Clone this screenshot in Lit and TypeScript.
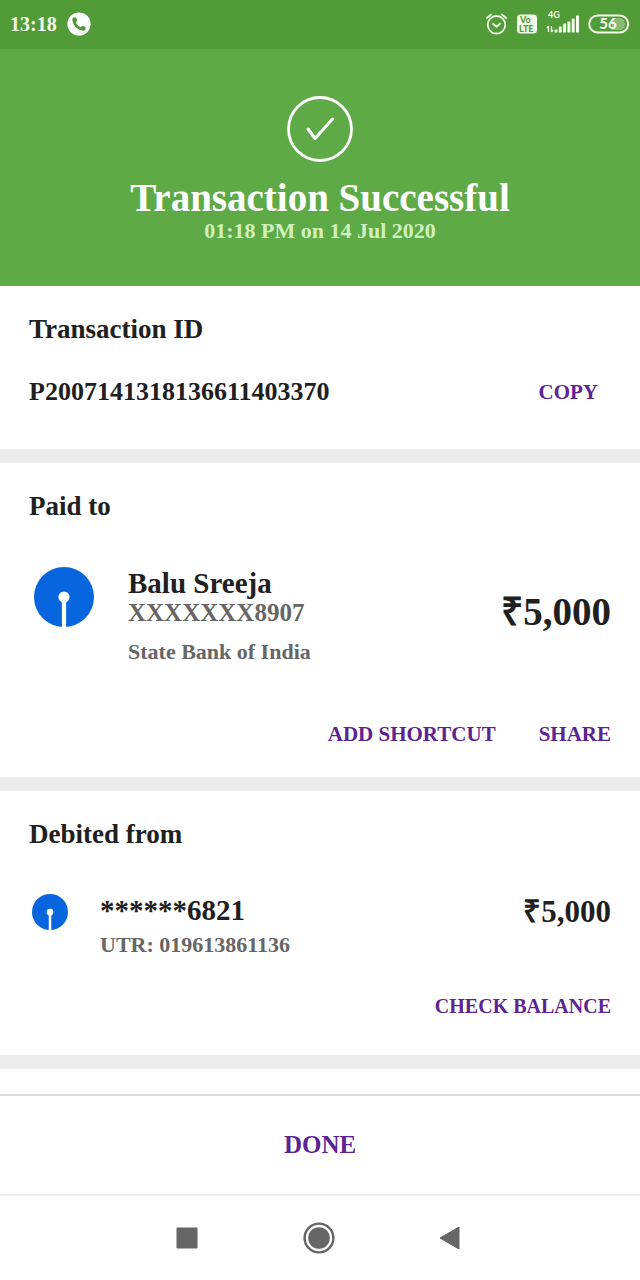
import { LitElement, html, css, svg } from "lit";
import { customElement, property } from "lit/decorators.js";

@customElement("bank-logo")
class BankLogo extends LitElement {
  static styles = css`
    :host { display: block; }
    .mark { display: block; width: 100%; }
  `;
  render() {
    return html`<svg class="mark" viewBox="0 0 60 60" role="img" aria-label="State Bank of India">
      <circle cx="30" cy="30" r="30" fill="#0766de" />
      <circle cx="30" cy="30" r="5.600" fill="#fff" />
      <path d="M30 30V60" stroke="#fff" stroke-width="4.200" />
    </svg>`;
  }
}

@customElement("status-bar")
class StatusBar extends LitElement {
  @property() time = "";
  @property() battery = "";
  static styles = css`
    :host {
      display: flex;
      align-items: center;
      justify-content: space-between;
      height: 49px;
      padding: 0 10px 1px;
      box-sizing: border-box;
      background: #519b38;
      color: #f3fbe9;
    }
    .group { display: flex; align-items: center; gap: 10px; }
    .time { font-size: 20px; line-height: 24px; font-weight: 700; }
    svg { display: block; }
    .status { gap: 8px; }
    .tag { font: 700 9px/10px "Lato", sans-serif; fill: #f3fbe9; }
    .volte { font: 900 9px/9px "Lato", sans-serif; fill: #519b38; }
    .level { font: 900 15px/18px "Lato", sans-serif; fill: #f3fbe9; }
  `;
  render() {
    const bars = [3, 6, 9, 11, 14, 17];
    return html`
      <div class="group">
        <span class="time">${this.time}</span>
        <svg width="24" height="24" viewBox="0 0 24 24" aria-hidden="true">
          <circle cx="12" cy="12" r="11.600" fill="#fff" />
          <path
            d="M7 5.600 9 5.300 10.300 8.700 8.800 10.300C9.800 12.500 11.400 14.100 13.700 15.200L15.300 13.700 18.700 15 18.500 17C18.200 18.200 17.300 18.800 16.100 18.700C10.500 18 6 13.500 5.400 7.900C5.300 6.800 5.800 5.900 7 5.600Z"
            fill="#519b38"
          />
        </svg>
      </div>
      <div class="group status">
        <svg width="23" height="24" viewBox="0 0 23 24" fill="none" stroke="#f3fbe9" stroke-width="1.800" stroke-linecap="round" aria-hidden="true">
          <circle cx="10.500" cy="12.800" r="8.800" />
          <path d="M7 11.800 10.500 14.800 14 11.800M0.900 6 5 2.500M20.100 6 16 2.500" />
        </svg>
        <svg width="20" height="20" viewBox="0 0 20 20" aria-hidden="true">
          <rect width="20" height="19" y="0.500" rx="3.500" fill="#f3fbe9" />
          <text class="volte" x="3" y="9">Vo</text>
          <text class="volte" x="2" y="17.500">LTE</text>
        </svg>
        <svg width="35" height="34" viewBox="0 0 35 34" aria-hidden="true">
          <text class="tag" x="3" y="11">4G</text>
          <path d="M3.500 25V19M2 21 3.500 19M6.500 19V25M8 23 6.500 25" stroke="#f3fbe9" stroke-width="1.300" fill="none" />
          ${bars.map((h, i) => svg`<rect x=${9.5 + i * 4.3} y=${25.5 - h} width="3" height=${h} rx="0.500" fill="#f3fbe9" />`)}
        </svg>
        <svg width="42" height="20" viewBox="0 0 42 20" role="img" aria-label="Battery">
          <path d="M24 4H33Q37 5 37 10T33 16H24Z" fill="#8abb75" />
          <rect x="1.200" y="1.500" width="39" height="17" rx="8.500" fill="none" stroke="#f3fbe9" stroke-width="2" />
          <text class="level" x="20" y="15" text-anchor="middle">${this.battery}</text>
        </svg>
      </div>
    `;
  }
}

@customElement("app-root")
class AppRoot extends LitElement {
  static styles = css`
    :host {
      display: flex;
      flex-direction: column;
      min-height: 100vh;
      background: #fff;
      color: #202020;
      font-family: "Liberation Serif", serif;
      font-weight: 700;
    }
    h1, h2, p { margin: 0; }
    button {
      margin: 0;
      padding: 0;
      border: 0;
      background: none;
      font: inherit;
      color: #5c2492;
      cursor: pointer;
    }
    .hero {
      display: flex;
      flex-direction: column;
      align-items: center;
      padding: 47px 16px 43px;
      background: #5eaa46;
      color: #fff;
      text-align: center;
    }
    .check { display: block; margin-bottom: 15px; }
    .title { font-size: 39px; line-height: 42px; }
    .when { font-size: 22px; line-height: 24px; color: #d0f0be; }
    .card { padding: 28px 29px 31px; border-bottom: 14px solid #ededed; }
    .card.id { padding-bottom: 42px; }
    .card.debit { padding-bottom: 37px; }
    .heading { font-size: 27px; line-height: 30px; }
    .row { display: flex; align-items: center; justify-content: space-between; }
    .id .row { margin-top: 33px; padding-right: 13px; }
    .number { font-size: 26px; line-height: 30px; }
    .party { display: flex; align-items: flex-start; margin-top: 46px; }
    .logo { width: 60px; margin: 0 34px 0 5px; }
    .logo.small { width: 36px; margin: 0 32px 0 3px; }
    .debit .party { margin-top: 45px; }
    .details { flex: 1; }
    .name { font-size: 29px; line-height: 32px; }
    .account { font-size: 25px; line-height: 28px; color: #666; }
    .note { font-size: 22px; line-height: 26px; color: #666; }
    .account + .note { margin-top: 12px; }
    .name + .note { margin-top: 6px; }
    .amount { font-size: 39px; line-height: 44px; margin-top: 23px; }
    .debit .amount { font-size: 31px; line-height: 36px; margin-top: 0; }
    .actions { display: flex; justify-content: flex-end; gap: 43px; margin-top: 57px; }
    .debit .actions { margin-top: 36px; }
    .action { font-size: 21px; line-height: 24px; }
    .debit .action { font-size: 20px; }
    .footer { margin-top: auto; }
    .done {
      display: block;
      width: 100%;
      padding: 35px 0;
      border-top: 2px solid #dcdcdc;
      border-bottom: 2px solid #eee;
      font-size: 25px;
      line-height: 28px;
    }
    .nav { display: flex; justify-content: center; gap: 98px; padding: 25px 2px 25px 0; }
    .nav svg { display: block; }
  `;

  render() {
    return html`
      <status-bar time="13:18" battery="56"></status-bar>
      <header class="hero">
        <svg class="check" width="66" height="66" viewBox="0 0 66 66" fill="none" stroke="#fff" stroke-linecap="round" stroke-linejoin="round" aria-hidden="true">
          <circle cx="33" cy="33" r="31.500" stroke-width="2.800" />
          <path d="M21 33 28 42.500 45.500 23" stroke-width="3" />
        </svg>
        <h1 class="title">Transaction Successful</h1>
        <p class="when">01:18 PM on 14 Jul 2020</p>
      </header>
      <main>
        <section class="card id">
          <h2 class="heading">Transaction ID</h2>
          <div class="row">
            <p class="number">P2007141318136611403370</p>
            <button class="action">COPY</button>
          </div>
        </section>
        <section class="card paid">
          <h2 class="heading">Paid to</h2>
          <div class="party">
            <bank-logo class="logo"></bank-logo>
            <div class="details">
              <p class="name">Balu Sreeja</p>
              <p class="account">XXXXXXX8907</p>
              <p class="note">State Bank of India</p>
            </div>
            <p class="amount">₹5,000</p>
          </div>
          <div class="actions">
            <button class="action">ADD SHORTCUT</button>
            <button class="action">SHARE</button>
          </div>
        </section>
        <section class="card debit">
          <h2 class="heading">Debited from</h2>
          <div class="party">
            <bank-logo class="logo small"></bank-logo>
            <div class="details">
              <p class="name">******6821</p>
              <p class="note">UTR: 019613861136</p>
            </div>
            <p class="amount">₹5,000</p>
          </div>
          <div class="actions">
            <button class="action">CHECK BALANCE</button>
          </div>
        </section>
      </main>
      <footer class="footer">
        <button class="done">DONE</button>
        <nav class="nav">
          <button aria-label="Recent apps">
            <svg width="34" height="34" viewBox="0 0 34 34"><rect x="6.500" y="6.500" width="21" height="21" rx="1" fill="#666" /></svg>
          </button>
          <button aria-label="Home">
            <svg width="34" height="34" viewBox="0 0 34 34">
              <circle cx="17" cy="17" r="14.400" fill="none" stroke="#666" stroke-width="2.400" />
              <circle cx="17" cy="17" r="10.800" fill="#666" />
            </svg>
          </button>
          <button aria-label="Back">
            <svg width="34" height="34" viewBox="0 0 34 34"><path d="M25 6V28L6 17Z" fill="#666" stroke="#666" stroke-width="1" stroke-linejoin="round" /></svg>
          </button>
        </nav>
      </footer>
    `;
  }
}
